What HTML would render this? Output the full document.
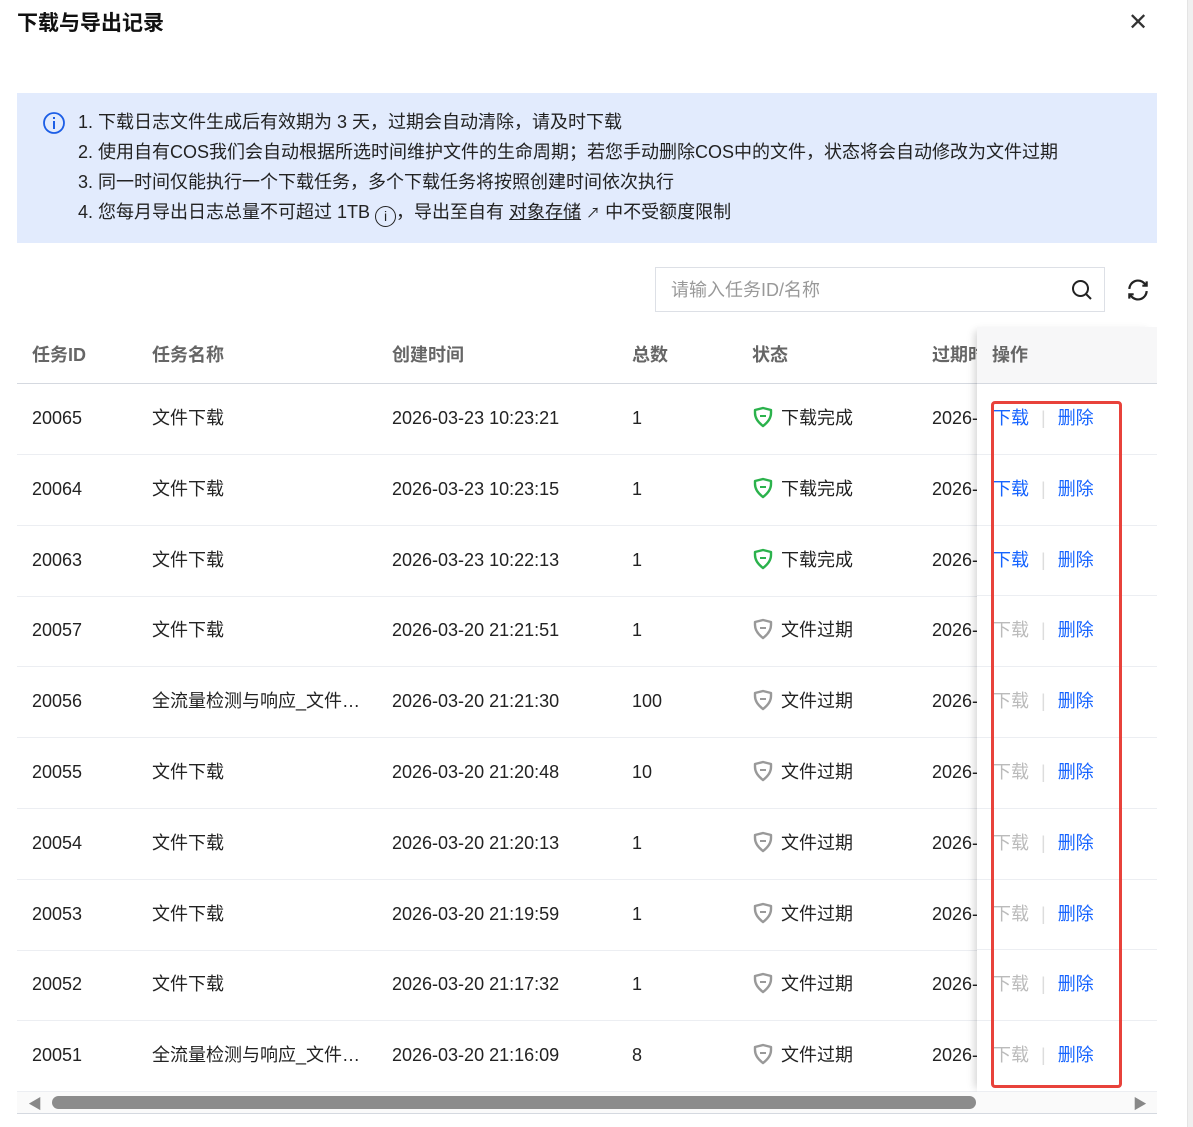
<!DOCTYPE html><html><head><meta charset="utf-8"><style>
*{margin:0;padding:0;box-sizing:border-box}
body{width:1193px;height:1127px;background:#fff;font-family:"Liberation Sans","Noto Sans CJK SC",sans-serif;color:#222;position:relative;overflow:hidden;font-size:18px;line-height:24px}
.abs{position:absolute;white-space:nowrap}
.title{left:17px;top:12px;font-size:21px;font-weight:bold;color:#111}
.close{left:1128px;top:11px;font-size:24px;color:#333}
.info{left:17px;top:93px;width:1140px;height:150px;background:#e2ebfd}
.info p{position:absolute;left:61px;color:#222}
.search{left:655px;top:267px;width:450px;height:45px;border:1px solid #dde0e6;color:#999;padding:10px 15px}
.hdr{left:17px;top:327px;width:1140px;height:57px;border-bottom:1px solid #d5d9e0}
.hdr span{position:absolute;top:16px;font-weight:bold;color:#666}
.row{left:17px;width:1140px;height:71px;border-bottom:1px solid #eceef2}
.row span{position:absolute;top:22px}
.fix{left:977px;top:327px;width:180px;height:765px;background:#fff;box-shadow:-6px 0 8px -4px rgba(0,0,0,.18)}
.sb{left:17px;top:1092px;width:1140px;height:22px;background:#fafafa;border-bottom:1px solid #d5d9e0}
</style></head><body>
<div class="abs title">下载与导出记录</div>
<div class="abs close">✕</div>
<div class="abs info">
<svg style="position:absolute;left:25px;top:18px" width="24" height="24" viewBox="0 0 24 24"><circle cx="12" cy="12" r="10" fill="none" stroke="#1c5ee6" stroke-width="1.8"/><rect x="11" y="10" width="2" height="8" fill="#1c5ee6"/><rect x="11" y="6" width="2" height="2" fill="#1c5ee6"/></svg>
<p style="top:17px">1. 下载日志文件生成后有效期为 3 天，过期会自动清除，请及时下载</p>
<p style="top:47px">2. 使用自有COS我们会自动根据所选时间维护文件的生命周期；若您手动删除COS中的文件，状态将会自动修改为文件过期</p>
<p style="top:77px">3. 同一时间仅能执行一个下载任务，多个下载任务将按照创建时间依次执行</p>
<p style="top:107px">4. 您每月导出日志总量不可超过 1TB <span style="display:inline-block;width:21px;height:21px;border:1.6px solid #222;border-radius:50%;font-size:14px;text-align:center;line-height:18px;vertical-align:-3px">i</span>，导出至自有 <u>对象存储</u> <span style="font-size:14px">↗</span> 中不受额度限制</p>
</div>
<div class="abs search">请输入任务ID/名称
<svg style="position:absolute;right:10px;top:10px" width="24" height="24" viewBox="0 0 24 24"><circle cx="10.5" cy="10.5" r="7.5" fill="none" stroke="#222" stroke-width="2"/><path d="M16 16l5 5" stroke="#222" stroke-width="2"/></svg></div>
<svg class="abs" style="left:1125px;top:277px" width="26" height="26" viewBox="0 0 24 24" fill="none" stroke="#222" stroke-width="2"><path d="M4 11a8 8 0 0 1 14-5l2 2M20 4v4h-4M20 13a8 8 0 0 1-14 5l-2-2M4 20v-4h4"/></svg>
<div class="abs hdr"><span style="left:15px">任务ID</span><span style="left:135px">任务名称</span><span style="left:375px">创建时间</span><span style="left:615px">总数</span><span style="left:735px">状态</span><span style="left:915px">过期时间</span></div>
<div id="rows"></div>
<div class="abs fix">
<div style="height:57px;background:#f7f7f8;border-bottom:1px solid #d5d9e0;padding:16px 15px;font-weight:bold;color:#666">操作</div>
<div id="ops"></div>
</div>
<div class="abs" style="left:991px;top:401px;width:131px;height:687px;border:3px solid #e8423b;border-radius:4px"></div>
<div class="abs sb"><span style="position:absolute;left:11px;top:0px;color:#888;font-size:14px">◀</span><div style="position:absolute;left:35px;top:4px;width:924px;height:13px;background:#8c8c8c;border-radius:7px"></div><span style="position:absolute;left:1116px;top:0px;color:#888;font-size:14px">▶</span></div>
<div class="abs" style="left:1187px;top:0;width:6px;height:1127px;background:#f0f0f0;border-left:1px solid #e4e4e4"></div>
<script>
var d=[["20065","文件下载","2026-03-23 10:23:21","1",1],["20064","文件下载","2026-03-23 10:23:15","1",1],["20063","文件下载","2026-03-23 10:22:13","1",1],["20057","文件下载","2026-03-20 21:21:51","1",0],["20056","全流量检测与响应_文件…","2026-03-20 21:21:30","100",0],["20055","文件下载","2026-03-20 21:20:48","10",0],["20054","文件下载","2026-03-20 21:20:13","1",0],["20053","文件下载","2026-03-20 21:19:59","1",0],["20052","文件下载","2026-03-20 21:17:32","1",0],["20051","全流量检测与响应_文件…","2026-03-20 21:16:09","8",0]];
var h="",o="";
d.forEach(function(r,i){var t=384+i*70.8;var c=r[4]?"#2bb24c":"#999";
h+='<div class="abs row" style="top:'+t+'px"><span style="left:15px">'+r[0]+'</span><span style="left:135px">'+r[1]+'</span><span style="left:375px">'+r[2]+'</span><span style="left:615px">'+r[3]+'</span><svg style="position:absolute;left:735px;top:22px" width="22" height="22" viewBox="0 0 22 22"><path d="M3 4l8-2 8 2v3c0 6-4 10-8 13C7 17 3 13 3 7z" fill="none" stroke="'+c+'" stroke-width="2.4" stroke-linejoin="round"/><path d="M8 10h6" stroke="'+c+'" stroke-width="2"/></svg><span style="left:764px">'+(r[4]?"下载完成":"文件过期")+'</span><span style="left:915px">2026-</span></div>';
o+='<div style="height:70.8px;border-bottom:1px solid #eceef2;padding-top:22px;padding-left:16px"><span style="color:'+(r[4]?"#1664ff":"#bbb")+'">下载</span><span style="color:#ddd;margin:0 12px">|</span><span style="color:#1664ff">删除</span></div>';});
document.getElementById("rows").innerHTML=h;document.getElementById("ops").innerHTML=o;
</script>
</body></html>
